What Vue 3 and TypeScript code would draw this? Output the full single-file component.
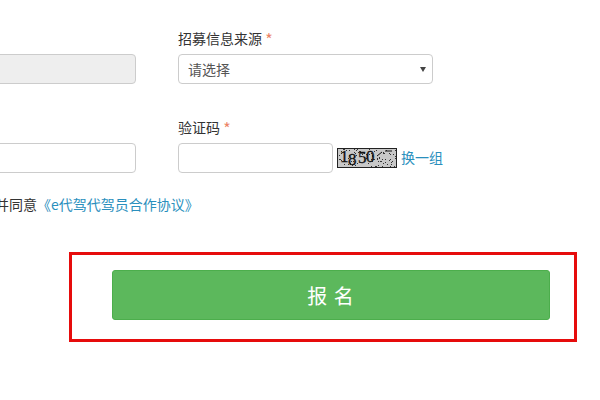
<script setup lang="ts">
const noise: { x: number; y: number }[] = []
let seed = 37
for (let i = 0; i < 95; i++) {
  seed = (seed * 73 + 41) % 1009
  const x = seed % 60
  seed = (seed * 73 + 41) % 1009
  noise.push({ x, y: seed % 20 })
}
</script>

<template>
  <main class="page">
    <form class="form" @submit.prevent>
      <div class="row">
        <div class="field left">
          <input class="control" disabled />
        </div>
        <div class="field">
          <label class="label">招募信息来源 <span class="req">*</span></label>
          <div class="select-wrap">
            <select class="control select">
              <option>请选择</option>
            </select>
          </div>
        </div>
      </div>
      <div class="row second">
        <div class="field left">
          <input class="control" />
        </div>
        <div class="field">
          <label class="label">验证码 <span class="req">*</span></label>
          <div class="captcha-line">
            <input class="control code" />
            <svg class="captcha" width="60" height="20" viewBox="0 0 60 20">
              <rect width="60" height="20" fill="#c8c8c8" />
              <rect v-for="(p, i) in noise" :key="i" :x="p.x" :y="p.y" width="1" height="1" fill="#333" />
              <text x="3" y="14" class="digit">1</text>
              <text x="11" y="17" class="digit">8</text>
              <text x="21" y="15" class="digit">5</text>
              <text x="29" y="14" class="digit">0</text>
              <path d="M40 8l5-4M48 3h7" stroke="#111" fill="none" />
              <rect x="0.5" y="0.5" width="59" height="19" fill="none" stroke="#222" />
            </svg>
            <a class="link" href="#">换一组</a>
          </div>
        </div>
      </div>
      <p class="agree">并同意<a class="link" href="#">《e代驾代驾员合作协议》</a></p>
      <div class="highlight">
        <button class="submit" type="button">报 名</button>
      </div>
    </form>
  </main>
</template>

<style scoped>
.page {
  width: 600px;
  height: 400px;
  overflow: hidden;
  background: #fff;
  font-family: "Noto Sans CJK SC", "Liberation Sans", sans-serif;
  font-size: 14px;
  color: #333;
}
.form {
  padding-top: 28px;
}
.row {
  display: grid;
  grid-template-columns: 136px 255px;
  column-gap: 42px;
}
.second {
  margin-top: 33px;
}
.field {
  display: flex;
  flex-direction: column;
  justify-content: flex-end;
}
.left {
  margin-left: -20px;
}
.label {
  height: 20px;
  line-height: 20px;
  margin-bottom: 6px;
}
.req {
  color: #ec8468;
  font-size: 16px;
  vertical-align: -2px;
}
.control {
  box-sizing: border-box;
  width: 100%;
  height: 30px;
  border: 1px solid #ccc;
  border-radius: 4px;
  background: #fff;
  padding: 0 10px;
  font: inherit;
  color: #555;
  outline: none;
}
.control:disabled {
  background: #eee;
}
.select-wrap {
  position: relative;
}
.select {
  display: block;
  appearance: none;
  padding-left: 9px;
}
.select-wrap::after {
  content: "";
  position: absolute;
  top: 13px;
  right: 7px;
  border-style: solid;
  border-width: 5px 3px 0;
  border-color: #444 transparent transparent;
  pointer-events: none;
}
.captcha-line {
  display: flex;
  align-items: center;
}
.code {
  flex: none;
  width: 155px;
}
.captcha {
  flex: none;
  margin-left: 4px;
}
.digit {
  font-family: "Liberation Serif", serif;
  font-size: 17px;
  stroke: #111;
  stroke-width: 0.3px;
  fill: #111;
}
.link {
  color: #2a8fbd;
  text-decoration: none;
}
.captcha-line .link {
  flex: none;
  margin: -2px 0 0 4px;
}
.agree {
  margin: 21px 0 0 -5px;
  line-height: 20px;
}
.highlight {
  box-sizing: border-box;
  width: 508px;
  height: 90px;
  margin: 38px 0 0 69px;
  padding: 15px 24px 0 40px;
  border: 3px solid #e60c0c;
}
.submit {
  display: block;
  width: 100%;
  height: 50px;
  border: 1px solid #4cae4c;
  border-radius: 3px;
  background: #5cb85c;
  color: #fff;
  font: inherit;
  font-size: 20px;
  letter-spacing: 1px;
}
</style>

<style>
html, body {
  margin: 0;
  background: #fff;
}
</style>
